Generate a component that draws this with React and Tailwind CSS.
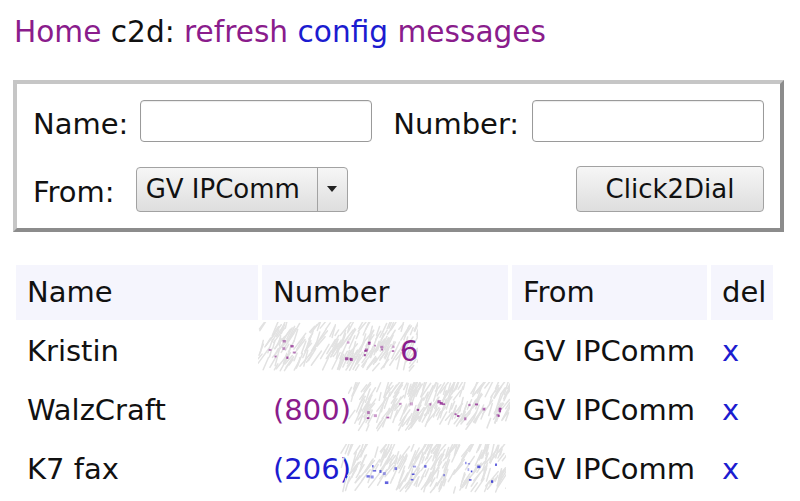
import React from "react";

function rng(seed) {
  let a = seed;
  return function () {
    a |= 0;
    a = (a + 0x6d2b79f5) | 0;
    let t = Math.imul(a ^ (a >>> 15), 1 | a);
    t = (t + Math.imul(t ^ (t >>> 7), 61 | t)) ^ t;
    return ((t ^ (t >>> 14)) >>> 0) / 4294967296;
  };
}

function Scribble({ width, height, color, seed }) {
  const r = rng(seed);
  const lines = [];
  for (let i = 0; i < 220; i++) {
    const x = r() * width;
    const y = 6 + r() * (height - 12);
    const len = 6 + r() * 14;
    const ang = -1.1 + (r() - 0.5) * 0.5;
    lines.push(
      <line
        key={"l" + i}
        x1={x}
        y1={y}
        x2={x + Math.cos(ang) * len}
        y2={y + Math.sin(ang) * len}
        stroke="#e2e2e2"
        strokeWidth="1.5"
        strokeLinecap="round"
      />
    );
  }
  const dots = [];
  for (let i = 0; i < 22; i++) {
    const x = 10 + r() * (width - 20);
    const y = height * 0.32 + r() * height * 0.36;
    dots.push(
      <rect key={"d" + i} x={x} y={y} width={1.5 + r() * 2} height={1.5 + r() * 1.5} fill={color} opacity={0.35 + r() * 0.5} />
    );
  }
  return (
    <svg width={width} height={height} className="absolute left-0 top-0">
      {lines}
      {dots}
    </svg>
  );
}

const purple = "text-[#8a1c8c]";
const blue = "text-[#1c1cd0]";

function Cell({ children, head, className = "" }) {
  return (
    <div
      className={
        "relative flex h-[55px] items-center pl-[11px] " +
        (head ? "bg-[#f5f5fd] " : "") +
        className
      }
    >
      {children}
    </div>
  );
}

export default function App() {
  return (
    <div className="min-h-[501px] bg-white font-['DejaVu_Sans',sans-serif] text-[#111]">
      <div className="pl-[14px] pt-[15px] text-[29.6px] leading-[1.164]">
        <span className={purple}>Home</span> c2d: <span className={purple}>refresh</span>{" "}
        <span className={blue}>config</span> <span className={purple}>messages</span>
      </div>

      <div className="ml-[13px] mt-[31px] w-[771px] border-[4px] border-t-[#c6c6c6] border-l-[#c6c6c6] border-b-[#8c8c8c] border-r-[#8c8c8c] px-[16px] pt-[16px] pb-[16px]">
        <div className="flex h-[42px] items-center text-[29px]">
          <span className="pt-[6px]">Name:</span>
          <div className="ml-[12px] h-[42px] w-[232px] shrink-0 rounded-[4px] border border-[#9a9a9a] bg-white shadow-[inset_0_1px_1px_rgba(0,0,0,0.08)]" />
          <span className="ml-[21px] pt-[6px]">Number:</span>
          <div className="ml-[13px] h-[42px] w-[232px] shrink-0 rounded-[4px] border border-[#9a9a9a] bg-white shadow-[inset_0_1px_1px_rgba(0,0,0,0.08)]" />
        </div>
        <div className="mt-[24px] flex h-[46px] items-center justify-between">
          <div className="flex items-center">
            <span className="pt-[6px] text-[29px]">From:</span>
            <div className="ml-[21px] flex h-[45px] w-[212px] items-center rounded-[4px] border border-[#a2a2a2] bg-gradient-to-b from-[#f6f6f6] to-[#dedede]">
              <span className="flex-1 pl-[9px] text-[26px] leading-none">GV IPComm</span>
              <div className="flex h-full w-[30px] items-center justify-center border-l border-[#a2a2a2]">
                <svg width="10" height="6" viewBox="0 0 10 6">
                  <path d="M0 0 L10 0 L5 6 Z" fill="#222" />
                </svg>
              </div>
            </div>
          </div>
          <div className="flex h-[46px] w-[188px] items-center justify-center rounded-[4px] border border-[#a2a2a2] bg-gradient-to-b from-[#f6f6f6] to-[#dedede] text-[26px]">
            Click2Dial
          </div>
        </div>
      </div>

      <div className="ml-[16px] mt-[33px] grid grid-cols-[242px_246px_195px_62px] gap-[4px] text-[29px]">
        <Cell head>Name</Cell>
        <Cell head>Number</Cell>
        <Cell head>From</Cell>
        <Cell head>del</Cell>

        <Cell>Kristin</Cell>
        <Cell>
          <div className="absolute top-[-2px] left-[-4px] h-[55px] w-[160px]">
            <Scribble width={160} height={55} color="#8a1c8c" seed={7} />
          </div>
          <span className={"relative ml-[127px] " + purple}>6</span>
        </Cell>
        <Cell>GV IPComm</Cell>
        <Cell>
          <span className={blue}>x</span>
        </Cell>

        <Cell>WalzCraft</Cell>
        <Cell>
          <span className={purple}>(800)</span>
          <div className="absolute top-[-1px] left-[86px] h-[55px] w-[162px]">
            <Scribble width={162} height={55} color="#8a1c8c" seed={21} />
          </div>
        </Cell>
        <Cell>GV IPComm</Cell>
        <Cell>
          <span className={blue}>x</span>
        </Cell>

        <Cell>K7 fax</Cell>
        <Cell>
          <span className={blue}>(206)</span>
          <div className="absolute top-[2px] left-[78px] h-[55px] w-[166px]">
            <Scribble width={166} height={55} color="#1c1cd0" seed={33} />
          </div>
        </Cell>
        <Cell>GV IPComm</Cell>
        <Cell>
          <span className={blue}>x</span>
        </Cell>
      </div>
    </div>
  );
}
